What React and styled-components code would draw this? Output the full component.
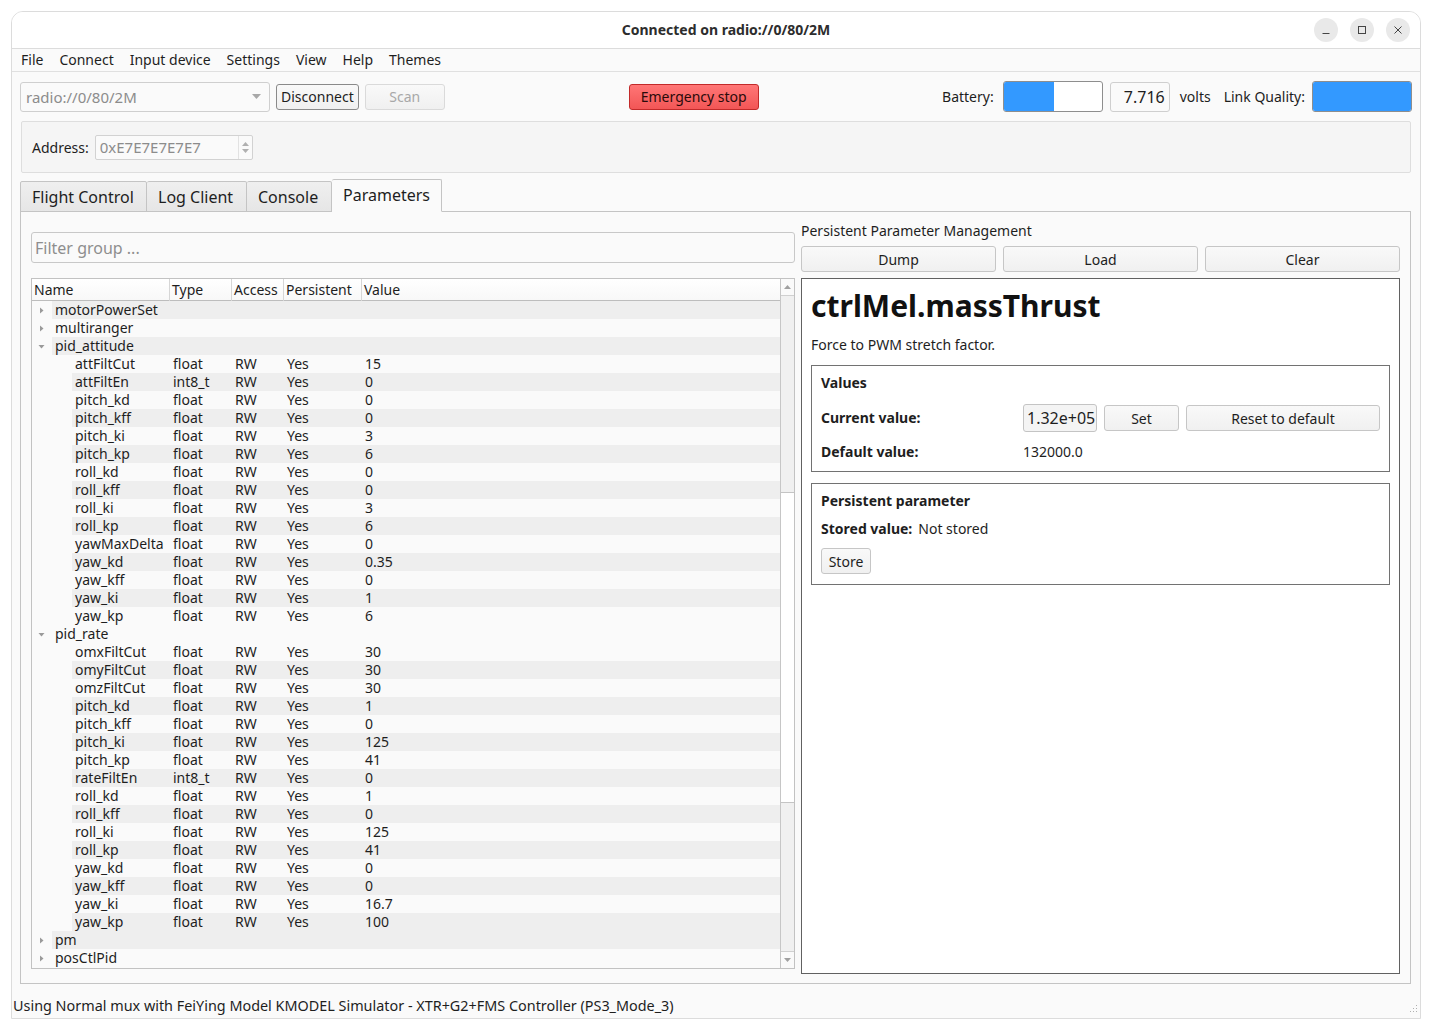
import React from "react";
import styled, { createGlobalStyle } from "styled-components";

const GlobalStyle = createGlobalStyle`
  html, body { margin: 0; padding: 0; background: #ffffff; }
  body {
    font-family: "Noto Sans", "Open Sans", sans-serif;
    font-size: 14px;
    color: #1e1e1e;
  }
  * { box-sizing: border-box; }
`;

const COLS = "138px 62px 52px 78px 1fr";

const pidAttitude = [
  ["attFiltCut", "float", "15"],
  ["attFiltEn", "int8_t", "0"],
  ["pitch_kd", "float", "0"],
  ["pitch_kff", "float", "0"],
  ["pitch_ki", "float", "3"],
  ["pitch_kp", "float", "6"],
  ["roll_kd", "float", "0"],
  ["roll_kff", "float", "0"],
  ["roll_ki", "float", "3"],
  ["roll_kp", "float", "6"],
  ["yawMaxDelta", "float", "0"],
  ["yaw_kd", "float", "0.35"],
  ["yaw_kff", "float", "0"],
  ["yaw_ki", "float", "1"],
  ["yaw_kp", "float", "6"],
];

const pidRate = [
  ["omxFiltCut", "float", "30"],
  ["omyFiltCut", "float", "30"],
  ["omzFiltCut", "float", "30"],
  ["pitch_kd", "float", "1"],
  ["pitch_kff", "float", "0"],
  ["pitch_ki", "float", "125"],
  ["pitch_kp", "float", "41"],
  ["rateFiltEn", "int8_t", "0"],
  ["roll_kd", "float", "1"],
  ["roll_kff", "float", "0"],
  ["roll_ki", "float", "125"],
  ["roll_kp", "float", "41"],
  ["yaw_kd", "float", "0"],
  ["yaw_kff", "float", "0"],
  ["yaw_ki", "float", "16.7"],
  ["yaw_kp", "float", "100"],
];

const groups = [
  { name: "motorPowerSet", shade: true },
  { name: "multiranger", shade: false },
  { name: "pid_attitude", shade: true, children: pidAttitude },
  { name: "pid_rate", shade: false, children: pidRate },
  { name: "pm", shade: true },
  { name: "posCtlPid", shade: false },
];

const Arrow = ({ open }) => (
  <svg width="7" height="7" viewBox="0 0 7 7">
    {open ? (
      <path d="M0.5 2 L6.5 2 L3.5 5.5 Z" fill="#9a9a9a" />
    ) : (
      <path d="M2 0.5 L5.5 3.5 L2 6.5 Z" fill="#9a9a9a" />
    )}
  </svg>
);

export default function App() {
  return (
    <>
      <GlobalStyle />
      <Page>
        <Window>
          <TitleBar>
            <span />
            <Title>Connected on radio://0/80/2M</Title>
            <WinControls>
              <WinButton>
                <svg width="10" height="10" viewBox="0 0 10 10">
                  <path d="M1.5 8.5 H8.5" stroke="#444" strokeWidth="1" />
                </svg>
              </WinButton>
              <WinButton>
                <svg width="10" height="10" viewBox="0 0 10 10">
                  <rect x="1.5" y="1.5" width="7" height="7" fill="none" stroke="#444" strokeWidth="1" />
                </svg>
              </WinButton>
              <WinButton>
                <svg width="10" height="10" viewBox="0 0 10 10">
                  <path d="M1.5 1.5 L8.5 8.5 M8.5 1.5 L1.5 8.5" stroke="#444" strokeWidth="1" />
                </svg>
              </WinButton>
            </WinControls>
          </TitleBar>

          <MenuBar>
            {["File", "Connect", "Input device", "Settings", "View", "Help", "Themes"].map((m) => (
              <MenuItem key={m}>{m}</MenuItem>
            ))}
          </MenuBar>

          <Toolbar>
            <Combo>
              <span>radio://0/80/2M</span>
              <svg width="9" height="5" viewBox="0 0 9 5">
                <path d="M0 0 L9 0 L4.5 5 Z" fill="#a8a8a8" />
              </svg>
            </Combo>
            <Button $dark>Disconnect</Button>
            <Button $disabled $width="80px">Scan</Button>
            <EmergencyButton>Emergency stop</EmergencyButton>
            <StatusGroup>
              <Label $gap="9px">Battery:</Label>
              <Progress $width="100px">
                <ProgressFill style={{ width: "51%" }} />
              </Progress>
              <ValueBox>7.716</ValueBox>
              <Label $gap="13px">volts</Label>
              <Label $gap="7px">Link Quality:</Label>
              <Progress $width="100px">
                <ProgressFill style={{ width: "100%" }} />
              </Progress>
            </StatusGroup>
          </Toolbar>

          <AddressBox>
            <Label $gap="6px">Address:</Label>
            <SpinBox>
              <span>0xE7E7E7E7E7</span>
              <SpinArrows>
                <svg width="7" height="4" viewBox="0 0 7 4">
                  <path d="M0 4 L7 4 L3.5 0 Z" fill="#b0b0b0" />
                </svg>
                <svg width="7" height="4" viewBox="0 0 7 4">
                  <path d="M0 0 L7 0 L3.5 4 Z" fill="#b0b0b0" />
                </svg>
              </SpinArrows>
            </SpinBox>
          </AddressBox>

          <TabBar>
            <Tab $width="127px">Flight Control</Tab>
            <Tab $width="100px">Log Client</Tab>
            <Tab $width="85px">Console</Tab>
            <Tab $width="110px" $active>
              Parameters
            </Tab>
          </TabBar>

          <TabPanel>
            <LeftColumn>
              <FilterInput placeholder="Filter group ..." />
              <Table>
                <TableBody>
                  <HeaderRow>
                    <HeaderCell>Name</HeaderCell>
                    <HeaderCell>Type</HeaderCell>
                    <HeaderCell>Access</HeaderCell>
                    <HeaderCell>Persistent</HeaderCell>
                    <HeaderCell $last>Value</HeaderCell>
                  </HeaderRow>
                  {groups.map((g) => (
                    <React.Fragment key={g.name}>
                      <Row $indent={20} $shade={g.shade}>
                        <NameCell>
                          <Branch $w={20}>
                            <Arrow open={!!g.children} />
                          </Branch>
                          <NameText>{g.name}</NameText>
                        </NameCell>
                      </Row>
                      {g.children &&
                        g.children.map(([n, t, v], i) => (
                          <Row key={n} $indent={40} $shade={i % 2 === 1}>
                            <NameCell>
                              <Branch $w={40} />
                              <NameText>{n}</NameText>
                            </NameCell>
                            <Cell>{t}</Cell>
                            <Cell>RW</Cell>
                            <Cell>Yes</Cell>
                            <Cell>{v}</Cell>
                          </Row>
                        ))}
                    </React.Fragment>
                  ))}
                </TableBody>
                <ScrollBar>
                  <ScrollButton>
                    <svg width="7" height="4" viewBox="0 0 7 4">
                      <path d="M0 4 L7 4 L3.5 0 Z" fill="#a0a0a0" />
                    </svg>
                  </ScrollButton>
                  <ScrollTrack $h="196px" />
                  <ScrollHandle />
                  <ScrollTrack />
                  <ScrollButton $bottom>
                    <svg width="7" height="4" viewBox="0 0 7 4">
                      <path d="M0 0 L7 0 L3.5 4 Z" fill="#a0a0a0" />
                    </svg>
                  </ScrollButton>
                </ScrollBar>
              </Table>
            </LeftColumn>

            <RightColumn>
              <SectionLabel>Persistent Parameter Management</SectionLabel>
              <ButtonRow>
                <Button $fill>Dump</Button>
                <Button $fill>Load</Button>
                <Button $fill>Clear</Button>
              </ButtonRow>
              <DetailBox>
                <ParamTitle>ctrlMel.massThrust</ParamTitle>
                <Description>Force to PWM stretch factor.</Description>
                <GroupBox>
                  <GroupTitle>Values</GroupTitle>
                  <ValuesGrid>
                    <BoldLabel>Current value:</BoldLabel>
                    <ValueInput>1.32e+05</ValueInput>
                    <Button $fill>Set</Button>
                    <Button $fill>Reset to default</Button>
                    <BoldLabel>Default value:</BoldLabel>
                    <PlainValue>132000.0</PlainValue>
                  </ValuesGrid>
                </GroupBox>
                <GroupBox>
                  <GroupTitle>Persistent parameter</GroupTitle>
                  <StoredRow>
                    <BoldLabel>Stored value:</BoldLabel>
                    <span>Not stored</span>
                  </StoredRow>
                  <div>
                    <Button $width="50px">Store</Button>
                  </div>
                </GroupBox>
              </DetailBox>
            </RightColumn>
          </TabPanel>

          <StatusBar>
            <span>Using Normal mux with FeiYing Model KMODEL Simulator - XTR+G2+FMS Controller (PS3_Mode_3)</span>
            <Grip>
              <svg width="10" height="10" viewBox="0 0 10 10">
                {[
                  [8, 0],
                  [8, 3],
                  [5, 3],
                  [8, 6],
                  [5, 6],
                  [2, 6],
                ].map(([x, y]) => (
                  <rect key={`${x}-${y}`} x={x} y={y + 2} width="1" height="1" fill="#b0b0b0" />
                ))}
              </svg>
            </Grip>
          </StatusBar>
        </Window>
      </Page>
    </>
  );
}

const Page = styled.div`
  width: 1432px;
  height: 1028px;
  padding: 11px 11px 0 11px;
`;

const Window = styled.div`
  height: 1008px;
  border: 1px solid #dcdcdc;
  border-radius: 12px 12px 0 0;
  background: #fafafa;
  display: flex;
  flex-direction: column;
  overflow: hidden;
`;

const TitleBar = styled.div`
  height: 37px;
  flex: none;
  background: #ffffff;
  border-bottom: 1px solid #dcdcdc;
  display: grid;
  grid-template-columns: 1fr auto 1fr;
  align-items: center;
  padding: 0 10px 1px 10px;
`;

const Title = styled.div`
  font-weight: 700;
  font-size: 14px;
  color: #2d2d2d;
  margin-left: 20px;
`;

const WinControls = styled.div`
  justify-self: end;
  display: flex;
  gap: 12px;
`;

const WinButton = styled.div`
  width: 24px;
  height: 24px;
  border-radius: 50%;
  background: #e9e9e9;
  display: flex;
  align-items: center;
  justify-content: center;
`;

const MenuBar = styled.div`
  height: 23px;
  flex: none;
  border-bottom: 1px solid #e0e0e0;
  display: flex;
  align-items: center;
  padding-left: 1px;
`;

const MenuItem = styled.div`
  padding: 0 8px;
  font-size: 14px;
  line-height: 20px;
`;

const Toolbar = styled.div`
  height: 49px;
  flex: none;
  display: flex;
  align-items: center;
  padding: 0 8px 0 8px;
`;

const Combo = styled.div`
  width: 250px;
  height: 30px;
  border: 1px solid #cfcfcf;
  border-radius: 3px;
  background: #fafafa;
  display: flex;
  align-items: center;
  justify-content: space-between;
  padding: 0 8px 0 5px;
  font-size: 15px;
  color: #8c8c8c;
  margin-right: 6px;
`;

const Button = styled.div`
  height: 26px;
  ${(p) => (p.$fill ? "flex: 1;" : "")}
  ${(p) => (p.$width ? `width: ${p.$width};` : "")}
  padding: 0 4px;
  border: 1px solid ${(p) => (p.$dark ? "#8a8a8a" : p.$disabled ? "#dadada" : "#c6c6c6")};
  border-radius: 3px;
  background: linear-gradient(#f9f9f9, #f0f0f0);
  color: ${(p) => (p.$disabled ? "#a8a8a8" : "#1e1e1e")};
  font-size: 14px;
  display: flex;
  align-items: center;
  justify-content: center;
  white-space: nowrap;
  margin-right: ${(p) => (p.$dark ? "6px" : "0")};
`;

const EmergencyButton = styled.div`
  height: 26px;
  width: 130px;
  margin-left: 184px;
  border: 1px solid #c22a2a;
  border-radius: 3px;
  background: linear-gradient(#ff7676, #f25656);
  color: #2a0a0a;
  font-size: 14px;
  display: flex;
  align-items: center;
  justify-content: center;
`;

const StatusGroup = styled.div`
  margin-left: auto;
  display: flex;
  align-items: center;
`;

const Label = styled.span`
  font-size: 14px;
  margin-right: ${(p) => p.$gap || "7px"};
  white-space: nowrap;
`;

const Progress = styled.div`
  width: ${(p) => p.$width};
  height: 31px;
  border: 1px solid #8e8e8e;
  border-radius: 3px;
  background: #ffffff;
  overflow: hidden;
  display: flex;
`;

const ProgressFill = styled.div`
  background: #3399ff;
  height: 100%;
`;

const ValueBox = styled.div`
  width: 60px;
  height: 30px;
  border: 1px solid #cfcfcf;
  border-radius: 3px;
  background: #fafafa;
  font-size: 16px;
  display: flex;
  align-items: center;
  justify-content: flex-end;
  padding-right: 4px;
  margin: 0 10px 0 7px;
`;

const AddressBox = styled.div`
  height: 52px;
  flex: none;
  margin: 0 9px 0 9px;
  border: 1px solid #dedede;
  border-radius: 2px;
  background: #f5f5f5;
  display: flex;
  align-items: center;
  padding-left: 10px;
`;

const SpinBox = styled.div`
  width: 158px;
  height: 25px;
  border: 1px solid #d2d2d2;
  border-radius: 2px;
  background: #fafafa;
  display: flex;
  align-items: center;
  justify-content: space-between;
  padding-left: 4px;
  font-size: 15px;
  color: #8c8c8c;
`;

const SpinArrows = styled.div`
  width: 14px;
  height: 100%;
  border-left: 1px solid #e2e2e2;
  display: flex;
  flex-direction: column;
  align-items: center;
  justify-content: center;
  gap: 3px;
`;

const TabBar = styled.div`
  height: 33px;
  flex: none;
  margin: 6px 0 -1px 8px;
  display: flex;
  align-items: flex-end;
  position: relative;
  z-index: 1;
`;

const Tab = styled.div`
  width: ${(p) => p.$width};
  height: ${(p) => (p.$active ? "33px" : "31px")};
  border: 1px solid #c4c4c4;
  border-left: none;
  border-bottom-color: ${(p) => (p.$active ? "#fafafa" : "#c4c4c4")};
  border-radius: 2px 2px 0 0;
  background: ${(p) => (p.$active ? "#fafafa" : "linear-gradient(#efefef, #e6e6e6)")};
  font-size: 16px;
  display: flex;
  align-items: center;
  padding-left: 11px;
  padding-bottom: ${(p) => (p.$active ? "2px" : "0")};
  &:first-child { border-left: 1px solid #c4c4c4; }
`;

const TabPanel = styled.div`
  flex: 1;
  min-height: 0;
  margin: 0 9px 0 8px;
  border: 1px solid #c4c4c4;
  background: #fafafa;
  display: flex;
  gap: 6px;
  padding: 10px 10px 9px 10px;
`;

const LeftColumn = styled.div`
  width: 764px;
  flex: none;
  display: flex;
  flex-direction: column;
  padding: 10px 0 5px 0;
`;

const FilterInput = styled.input`
  height: 31px;
  flex: none;
  border: 1px solid #c8c8c8;
  border-radius: 3px;
  background: #fafafa;
  font-family: inherit;
  font-size: 16px;
  padding: 0 3px;
  margin-bottom: 15px;
  outline: none;
  &::placeholder { color: #8e8e8e; }
`;

const Table = styled.div`
  flex: 1;
  border: 1px solid #c2c2c2;
  display: flex;
  background: #fafafa;
  overflow: hidden;
`;

const TableBody = styled.div`
  flex: 1;
`;

const HeaderRow = styled.div`
  height: 22px;
  display: grid;
  grid-template-columns: ${COLS};
  background: linear-gradient(#ffffff, #f8f8f8);
  border-bottom: 1px solid #bdbdbd;
`;

const HeaderCell = styled.div`
  padding-left: 2px;
  line-height: 22px;
  border-right: ${(p) => (p.$last ? "none" : "1px solid #d6d6d6")};
  white-space: nowrap;
`;

const Row = styled.div`
  height: 18px;
  display: grid;
  grid-template-columns: ${COLS};
  line-height: 18px;
  background: ${(p) =>
    `linear-gradient(to right, transparent ${p.$indent}px, ${p.$shade ? "#eeeeee" : "#fafafa"} ${p.$indent}px)`};
`;

const NameCell = styled.div`
  display: flex;
  align-items: center;
  white-space: nowrap;
`;

const Branch = styled.div`
  width: ${(p) => p.$w}px;
  flex: none;
  display: flex;
  align-items: center;
  justify-content: center;
  padding-right: 2px;
`;

const NameText = styled.span`
  padding-left: 3px;
`;

const Cell = styled.div`
  padding-left: 3px;
  white-space: nowrap;
`;

const ScrollBar = styled.div`
  width: 14px;
  flex: none;
  border-left: 1px solid #c6c6c6;
  background: #f0f0f0;
  display: flex;
  flex-direction: column;
`;

const ScrollButton = styled.div`
  height: 17px;
  flex: none;
  background: #fafafa;
  border-bottom: ${(p) => (p.$bottom ? "none" : "1px solid #d0d0d0")};
  border-top: ${(p) => (p.$bottom ? "1px solid #d0d0d0" : "none")};
  display: flex;
  align-items: center;
  justify-content: center;
`;

const ScrollTrack = styled.div`
  ${(p) => (p.$h ? `height: ${p.$h}; flex: none;` : "flex: 1;")}
`;

const ScrollHandle = styled.div`
  height: 311px;
  flex: none;
  background: #ffffff;
  border-top: 1px solid #c4c4c4;
  border-bottom: 1px solid #c4c4c4;
`;

const RightColumn = styled.div`
  flex: 1;
  display: flex;
  flex-direction: column;
`;

const SectionLabel = styled.div`
  font-size: 14px;
  line-height: 18px;
  margin-bottom: 6px;
`;

const ButtonRow = styled.div`
  display: flex;
  gap: 7px;
  margin-bottom: 6px;
`;

const DetailBox = styled.div`
  flex: 1;
  border: 1px solid #616161;
  background: #ffffff;
  padding: 8px 9px;
  display: flex;
  flex-direction: column;
`;

const ParamTitle = styled.div`
  font-size: 30px;
  font-weight: 700;
  line-height: 38px;
  color: #111;
`;

const Description = styled.div`
  font-size: 14px;
  line-height: 18px;
  margin: 11px 0 11px 0;
`;

const GroupBox = styled.div`
  border: 1px solid #727272;
  padding: 8px 9px 10px 9px;
  margin-bottom: 11px;
  display: flex;
  flex-direction: column;
  gap: 10px;
`;

const GroupTitle = styled.div`
  font-weight: 700;
  font-size: 14px;
  line-height: 18px;
`;

const ValuesGrid = styled.div`
  display: grid;
  grid-template-columns: 195px 74px 75px 1fr;
  column-gap: 7px;
  row-gap: 10px;
  align-items: center;
  margin-top: 2px;
`;

const BoldLabel = styled.span`
  font-weight: 700;
  font-size: 14px;
  line-height: 18px;
  margin-right: 6px;
`;

const ValueInput = styled.div`
  height: 28px;
  border: 1px solid #c4c4c4;
  border-radius: 3px;
  background: #f4f4f4;
  font-size: 16px;
  display: flex;
  align-items: center;
  padding-left: 3px;
  white-space: nowrap;
  overflow: hidden;
`;

const PlainValue = styled.span`
  grid-column: 2 / 4;
  font-size: 14px;
`;

const StoredRow = styled.div`
  display: flex;
  align-items: center;
  line-height: 18px;
`;

const StatusBar = styled.div`
  height: 34px;
  flex: none;
  display: flex;
  align-items: center;
  justify-content: space-between;
  padding: 9px 2px 0 1px;
  font-size: 14.4px;
`;

const Grip = styled.div`
  align-self: flex-end;
  margin-bottom: 1px;
`;
